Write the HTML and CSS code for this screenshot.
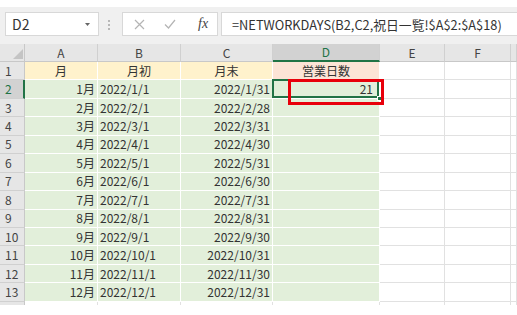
FILE: index.html
```html
<!DOCTYPE html>
<html lang="ja">
<head>
<meta charset="utf-8">
<link rel="stylesheet" href="styles.css">
</head>
<body>
<div class="app">
  <div class="toolbar">
    <div class="namebox"><span>D2</span><svg class="dd" width="5" height="3" viewBox="0 0 5 3"><path d="M0 0H5L2.5 3Z" fill="#666"/></svg></div>
    <div class="dots"><i></i><i></i><i></i></div>
    <div class="fbtns">
      <svg width="11" height="11" viewBox="0 0 11 11"><path d="M1 1L10 10M10 1L1 10" stroke="#b4b4b4" stroke-width="1.2" fill="none"/></svg>
      <svg width="12" height="10" viewBox="0 0 12 10"><path d="M1 5.5L4.5 9L11 1" stroke="#b4b4b4" stroke-width="1.2" fill="none"/></svg>
      <span class="fx">fx</span>
    </div>
    <div class="fbox">=NETWORKDAYS(B2,C2,祝日一覧!$A$2:$A$18)</div>
  </div>
  <div class="sheet">
    <div class="c corner"><svg width="10" height="10" viewBox="0 0 10 10"><path d="M10 0V10H0Z" fill="#c4c4c4"/></svg></div>
    <div class="c hd">A</div><div class="c hd">B</div><div class="c hd">C</div><div class="c hd sel">D</div><div class="c hd">E</div><div class="c hd">F</div><div class="c hd last"></div>

    <div class="c rh">1</div><div class="c y">月</div><div class="c y">月初</div><div class="c y">月末</div><div class="c o">営業日数</div><div class="c w"></div><div class="c w"></div><div class="c w"></div>

    <div class="c rh sel">2</div><div class="c g r">1月</div><div class="c g">2022/1/1</div><div class="c g r">2022/1/31</div><div class="c g r active">21<span class="mark"></span></div><div class="c w"></div><div class="c w"></div><div class="c w"></div>
    <div class="c rh">3</div><div class="c g r">2月</div><div class="c g">2022/2/1</div><div class="c g r">2022/2/28</div><div class="c g"></div><div class="c w"></div><div class="c w"></div><div class="c w"></div>
    <div class="c rh">4</div><div class="c g r">3月</div><div class="c g">2022/3/1</div><div class="c g r">2022/3/31</div><div class="c g"></div><div class="c w"></div><div class="c w"></div><div class="c w"></div>
    <div class="c rh">5</div><div class="c g r">4月</div><div class="c g">2022/4/1</div><div class="c g r">2022/4/30</div><div class="c g"></div><div class="c w"></div><div class="c w"></div><div class="c w"></div>
    <div class="c rh">6</div><div class="c g r">5月</div><div class="c g">2022/5/1</div><div class="c g r">2022/5/31</div><div class="c g"></div><div class="c w"></div><div class="c w"></div><div class="c w"></div>
    <div class="c rh">7</div><div class="c g r">6月</div><div class="c g">2022/6/1</div><div class="c g r">2022/6/30</div><div class="c g"></div><div class="c w"></div><div class="c w"></div><div class="c w"></div>
    <div class="c rh">8</div><div class="c g r">7月</div><div class="c g">2022/7/1</div><div class="c g r">2022/7/31</div><div class="c g"></div><div class="c w"></div><div class="c w"></div><div class="c w"></div>
    <div class="c rh">9</div><div class="c g r">8月</div><div class="c g">2022/8/1</div><div class="c g r">2022/8/31</div><div class="c g"></div><div class="c w"></div><div class="c w"></div><div class="c w"></div>
    <div class="c rh">10</div><div class="c g r">9月</div><div class="c g">2022/9/1</div><div class="c g r">2022/9/30</div><div class="c g"></div><div class="c w"></div><div class="c w"></div><div class="c w"></div>
    <div class="c rh">11</div><div class="c g r">10月</div><div class="c g">2022/10/1</div><div class="c g r">2022/10/31</div><div class="c g"></div><div class="c w"></div><div class="c w"></div><div class="c w"></div>
    <div class="c rh">12</div><div class="c g r">11月</div><div class="c g">2022/11/1</div><div class="c g r">2022/11/30</div><div class="c g"></div><div class="c w"></div><div class="c w"></div><div class="c w"></div>
    <div class="c rh">13</div><div class="c g r">12月</div><div class="c g">2022/12/1</div><div class="c g r">2022/12/31</div><div class="c g"></div><div class="c w"></div><div class="c w"></div><div class="c w"></div>

    <div class="c rh stub"></div><div class="c w stub"></div><div class="c w stub"></div><div class="c w stub"></div><div class="c w stub"></div><div class="c w stub"></div><div class="c w stub"></div><div class="c w stub"></div>
  </div>
</div>
</body>
</html>
```

FILE: styles.css
```css
html, body {
  margin: 0;
  background: #ffffff;
}
body {
  font-family: "Noto Sans CJK JP", "Noto Sans", sans-serif;
  color: #333333;
}
.app {
  padding-top: 7px;
  width: 517px;
  overflow: hidden;
}
.toolbar {
  display: flex;
  align-items: flex-start;
  box-sizing: border-box;
  height: 37px;
  padding: 5px 0 0 5px;
  background: #f0f0f0;
}
.namebox {
  box-sizing: border-box;
  width: 94px;
  height: 24px;
  border: 1px solid #d8d8d8;
  background: #fff;
  display: flex;
  align-items: center;
  justify-content: space-between;
  padding: 0 8px 0 6px;
  font-size: 14px;
  color: #333;
}
.dots {
  display: flex;
  flex-direction: column;
  gap: 2px;
  margin: 8px 12px 0 9px;
}
.dots i {
  display: block;
  width: 2px;
  height: 2px;
  background: #b8b8b8;
}
.fbtns {
  box-sizing: border-box;
  width: 96px;
  height: 24px;
  border: 1px solid #d8d8d8;
  background: #fff;
  display: flex;
  align-items: center;
  padding-left: 11px;
  gap: 19px;
}
.fx {
  font-family: "Liberation Serif", serif;
  font-style: italic;
  font-size: 14px;
  color: #444;
  margin-left: 3px;
}
.fbox {
  box-sizing: border-box;
  flex: 1;
  margin-left: 3px;
  height: 24px;
  border: 1px solid #d8d8d8;
  border-right: none;
  background: #fff;
  display: flex;
  align-items: center;
  padding-left: 10px;
  font-size: 12.8px;
  white-space: nowrap;
  overflow: hidden;
  color: #333;
}
.sheet {
  display: grid;
  grid-template-columns: 25px 73px 83px 92px 107px 65px 66px 1fr;
  grid-template-rows: 18px repeat(13, 18.45px) 3px;
}
.c {
  box-sizing: border-box;
  border-right: 1px solid #e1e1e1;
  border-bottom: 1px solid #e1e1e1;
  display: flex;
  align-items: center;
  padding: 0 2px;
  font-size: 12px;
  white-space: nowrap;
  overflow: visible;
  line-height: 1;
}
.corner {
  background: #e6e6e6;
  border-right-color: #c8c8c8;
  border-bottom-color: #c8c8c8;
  justify-content: flex-end;
  align-items: flex-end;
  padding: 0 1px 2px 0;
}
.hd {
  background: #e6e6e6;
  border-right-color: #d0d0d0;
  border-bottom-color: #c8c8c8;
  justify-content: center;
  color: #444;
}
.hd.sel {
  background: #d2d2d2;
  color: #217346;
  border-bottom: 2px solid #217346;
}
.rh {
  background: #e6e6e6;
  border-right-color: #c8c8c8;
  border-bottom-color: #d0d0d0;
  justify-content: flex-start;
  padding-left: 5px;
  color: #444;
}
.rh.sel {
  background: #d2d2d2;
  color: #217346;
  border-right: 2px solid #217346;
}
.y {
  background: #fff2cc;
  border-color: #fff;
  justify-content: center;
}
.o {
  background: #fce4d6;
  border-color: #fff;
  justify-content: center;
}
.g {
  background: #e2efda;
  border-color: #fff;
}
.r {
  justify-content: flex-end;
}
.w {
  background: #fff;
}
.stub {
  border-bottom: none;
}
.active {
  position: relative;
  padding-right: 6px;
}
.active::before {
  content: "";
  position: absolute;
  left: -1px;
  top: -1px;
  right: 0;
  bottom: 0;
  border: 2px solid #217346;
}
.active::after {
  content: "";
  position: absolute;
  right: -3px;
  bottom: -3px;
  width: 5px;
  height: 5px;
  background: #217346;
  border: 1px solid #fff;
  box-sizing: border-box;
}
.mark {
  position: absolute;
  left: 15px;
  top: -1px;
  right: -5px;
  bottom: -7px;
  border: 3px solid #e8000b;
  z-index: 2;
}
```
